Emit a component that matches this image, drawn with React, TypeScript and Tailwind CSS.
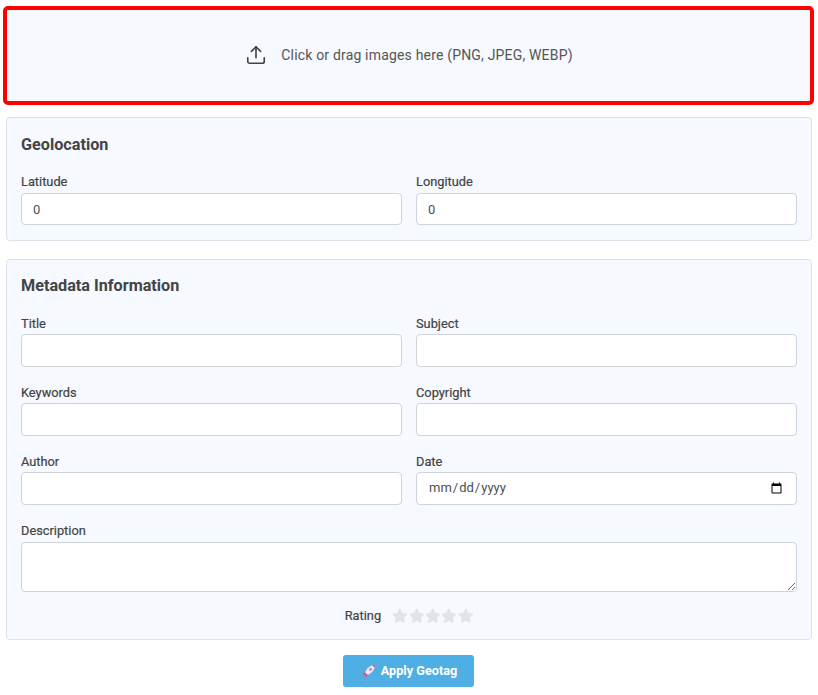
import { Upload } from "lucide-react";
import { FaStar } from "react-icons/fa";

const inputClass =
    "block w-full px-[11px] bg-white border border-[#ced4da] rounded-[4px] text-[13px] text-[#495057] outline-none [&::-webkit-datetime-edit]:relative [&::-webkit-datetime-edit]:-top-px";

type FieldProps = {
    label: string;
    type?: string;
    value?: string;
    tall?: boolean;
};

const Field: React.FC<FieldProps> = ({ label, type = "text", value, tall }) => {
    return (
        <div>
            <label className={`block h-[19px] text-[12.8px] leading-[19px] text-[#444] [-webkit-text-stroke:0.2px_#444] ${tall ? "mb-[1px]" : "mb-[2px]"}`}>{label}</label>
            <input type={type} defaultValue={value} className={`${inputClass} ${tall ? "h-[33px]" : "h-8"}`} />
        </div>
    );
};

const Rocket = () => (
    <svg width="14" height="14" viewBox="0 0 14 14" className="shrink-0">
        <path d="M2.5 8.5 L0.8 9.5 L2 12 L4.5 13 L5.5 11.5 Z" fill="#e8487f" />
        <path d="M3.2 8.2 C5 3.8 8.5 1.2 13 1 C12.8 5.5 10.2 9 5.8 10.8 Z" fill="#f3e6ee" />
        <path d="M10.2 1.3 C11.2 1 12.2 1 13 1 C13 1.8 13 2.8 12.7 3.8 Z" fill="#e8487f" />
        <circle cx="8.6" cy="5.4" r="1.3" fill="#8e8fc4" />
        <path d="M1.4 12.6 L2.8 10.6 L3.6 11.4 Z" fill="#f59a3c" />
    </svg>
);

export default function App() {
    return (
        <div className="min-h-[695px] bg-white pl-[3px] pr-[4px] pt-[6px] font-['Roboto',sans-serif] text-[#444]">
            <div className="flex items-center justify-center gap-[14px] h-[99px] pb-[1px] pl-[1px] bg-[#f6f9ff] border-4 border-[#ff0000] rounded-[5px] text-sm text-[#555]">
                <Upload size={22} strokeWidth={1.8} className="text-[#444]" />
                <span className="tracking-[0.18px]">Click or drag images here (PNG, JPEG, WEBP)</span>
            </div>

            <section className="ml-[3px] mr-[2px] mt-[12px] h-[124px] px-[14px] pt-[15px] bg-[#f6f9ff] border border-[#dde1e9] rounded-[4px]">
                <h2 className="h-[24px] mb-[15px] text-[16.2px] leading-[24px] font-bold text-[#444]">Geolocation</h2>
                <div className="grid grid-cols-2 gap-x-[14px]">
                    <Field label="Latitude" value="0" />
                    <Field label="Longitude" value="0" />
                </div>
            </section>

            <section className="ml-[3px] mr-[2px] mt-[18px] h-[381px] px-[14px] pt-[14px] bg-[#f6f9ff] border border-[#dde1e9] rounded-[4px]">
                <h2 className="h-[24px] mb-[16px] text-[16.2px] leading-[24px] font-bold text-[#444]">Metadata Information</h2>
                <div className="grid grid-cols-2 gap-x-[14px] gap-y-[16px]">
                    <Field label="Title" tall />
                    <Field label="Subject" tall />
                    <Field label="Keywords" tall />
                    <Field label="Copyright" tall />
                    <Field label="Author" tall />
                    <Field label="Date" type="date" tall />
                </div>
                <div className="mt-[16px]">
                    <label className="block h-[19px] mb-[2px] text-[12.8px] leading-[19px] text-[#444] [-webkit-text-stroke:0.2px_#444]">Description</label>
                    <textarea className="block w-full h-[50px] px-[11px] py-[6px] bg-white border border-[#ced4da] rounded-[4px] text-sm outline-none" />
                </div>
                <div className="flex items-center justify-center gap-[11px] mt-[14px]">
                    <span className="text-[12.8px] text-[#444] [-webkit-text-stroke:0.2px_#444]">Rating</span>
                    <div className="flex gap-[0.8px] text-[#e0e3e8]">
                        <FaStar size={15.6} />
                        <FaStar size={15.6} />
                        <FaStar size={15.6} />
                        <FaStar size={15.6} />
                        <FaStar size={15.6} />
                    </div>
                </div>
            </section>

            <div className="flex justify-center mt-[15px]">
                <button className="flex items-center justify-center gap-[5px] w-[131px] h-8 pl-[2px] bg-[#4faee3] rounded-[3px] text-[12.7px] font-bold text-white">
                    <Rocket />
                    <span>Apply Geotag</span>
                </button>
            </div>
        </div>
    );
}
